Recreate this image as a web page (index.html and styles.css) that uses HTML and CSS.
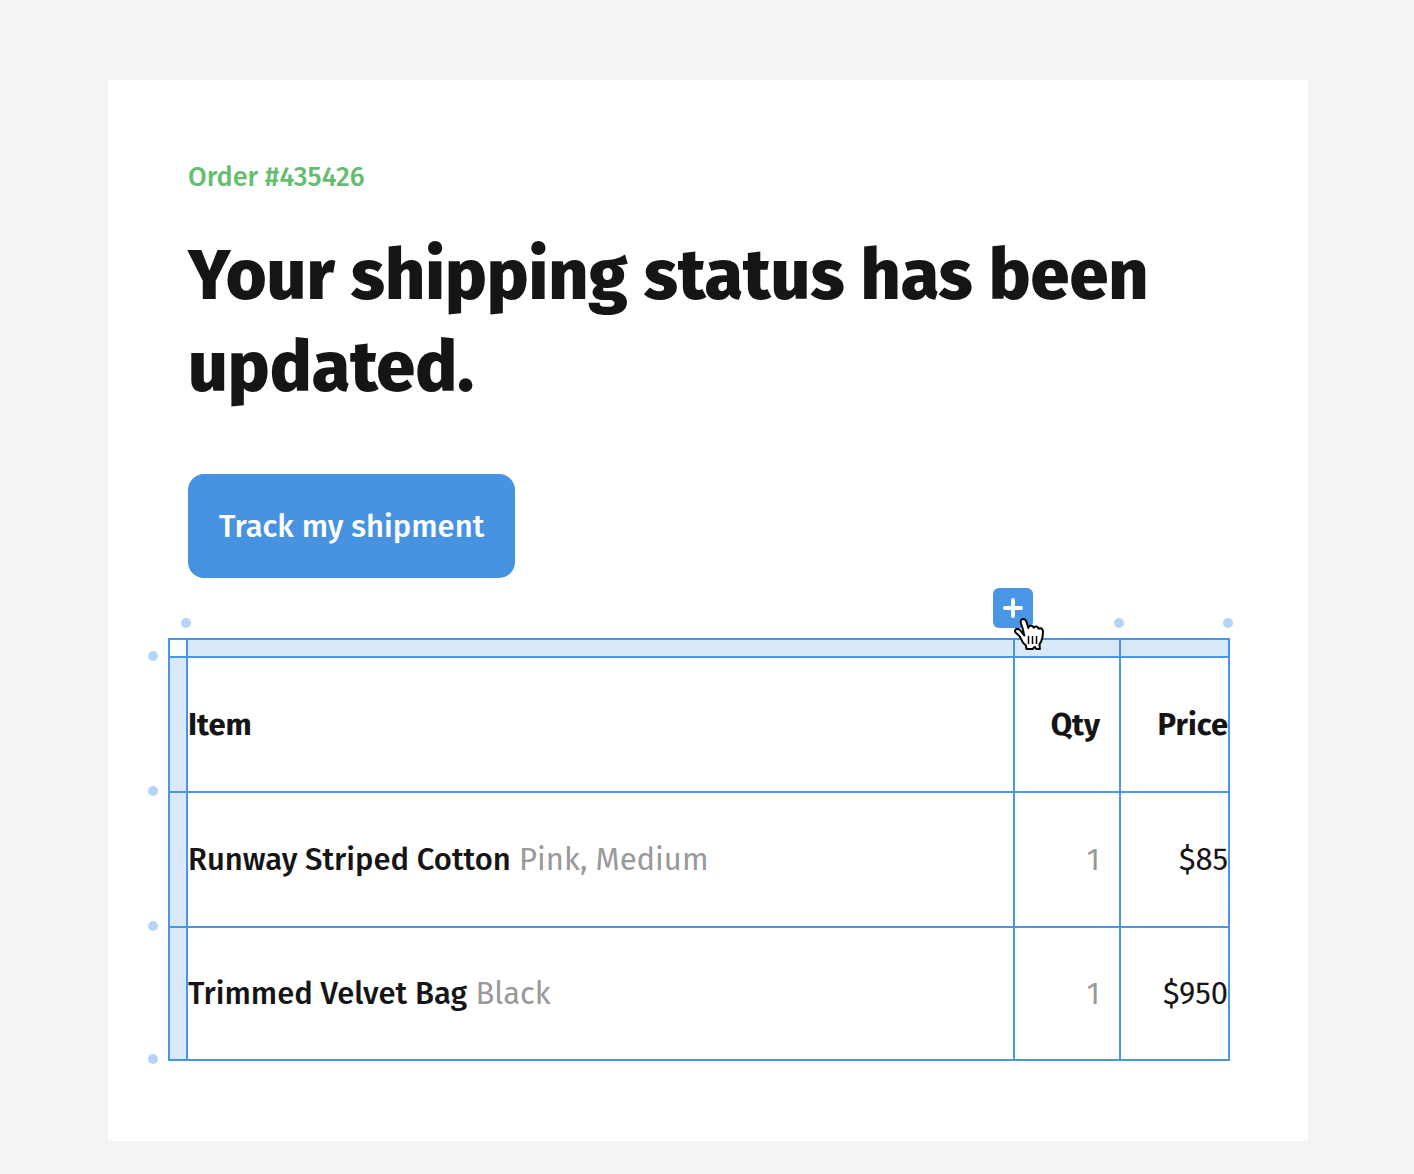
FILE: index.html
```html
<!DOCTYPE html>
<html lang="en">
<head>
<meta charset="utf-8">
<meta name="viewport" content="width=device-width, initial-scale=1">
<title>Order #435426</title>
<link rel="stylesheet" href="styles.css">
</head>
<body>
  <main class="email">
    <p class="order">Order #435426</p>
    <h1>Your shipping status has been updated.</h1>
    <button type="button" class="track">Track my shipment</button>

    <div class="editor">
      <table class="items">
        <colgroup>
          <col class="col-handle">
          <col>
          <col class="col-qty">
          <col class="col-price">
        </colgroup>
        <thead>
          <tr class="handles">
            <td class="corner">
              <button type="button" class="dot dot-col" aria-label="Insert column before Item"></button>
              <button type="button" class="dot dot-row" aria-label="Insert row at top"></button>
            </td>
            <td class="handle">
              <button type="button" class="add" aria-label="Insert column after Item">
                <svg width="20" height="20" viewBox="0 0 20 20" aria-hidden="true">
                  <path d="M10 2v16M2 10h16" fill="none" stroke="#fff" stroke-width="4" stroke-linecap="round"/>
                </svg>
              </button>
              <svg class="cursor" width="32" height="34" viewBox="0 0 32 34" aria-hidden="true">
                <path d="M11.300 18.500 9.500 11 8 6.500C7.200 3.800 8.200 2 10 2s2.900 1 3.500 3l1.900 6c.2-1.600 1.300-2.300 2.700-2.300s2.300.7 2.700 2c.6-.9 1.400-1.300 2.500-1.200s1.900.8 2.300 2.200c.7-.6 1.400-.7 2.300-.4 1.500.5 2.100 1.800 2.100 3.700 0 3.500-.6 6.500-1.700 9l-1.800 3.500.4 4.500h-3.700l-1.400-2.200-2.100 2.200h-6.200l-.6-3.500c-2.600-2-4.400-4.700-5.500-8-.8-1.700-2.300-2.700-4.100-4.200-1.500-1.300-1.700-2.500-.9-3.500 1-1.200 3-1 4.600.2l4.300 5.500" fill="#fff" stroke="#000" stroke-width="2" stroke-linejoin="round" stroke-linecap="round"/>
                <path d="M15.500 19v8M19.500 19v8M23.500 19v8" fill="none" stroke="#000" stroke-width="1.500"/>
              </svg>
            </td>
            <td class="handle">
              <button type="button" class="dot dot-col" aria-label="Insert column after Qty"></button>
            </td>
            <td class="handle">
              <button type="button" class="dot dot-col" aria-label="Insert column after Price"></button>
            </td>
          </tr>
          <tr>
            <td class="handle">
              <button type="button" class="dot dot-row" aria-label="Insert row below header"></button>
            </td>
            <th scope="col">Item</th>
            <th scope="col" class="qty">Qty</th>
            <th scope="col" class="price">Price</th>
          </tr>
        </thead>
        <tbody>
          <tr>
            <td class="handle">
              <button type="button" class="dot dot-row" aria-label="Insert row below Runway Striped Cotton"></button>
            </td>
            <td><strong>Runway Striped Cotton</strong> <span class="option">Pink, Medium</span></td>
            <td class="qty">1</td>
            <td class="price">$85</td>
          </tr>
          <tr>
            <td class="handle">
              <button type="button" class="dot dot-row" aria-label="Insert row below Trimmed Velvet Bag"></button>
            </td>
            <td><strong>Trimmed Velvet Bag</strong> <span class="option">Black</span></td>
            <td class="qty">1</td>
            <td class="price">$950</td>
          </tr>
        </tbody>
      </table>
    </div>
  </main>
</body>
</html>
```
FILE: styles.css
```css
* {
  box-sizing: border-box;
}
body {
  margin: 0;
  padding: 80px 106px 33px 108px;
  background: #f4f4f4;
  color: #151515;
  font-family: "Fira Sans", Roboto, sans-serif;
  font-size: 31px;
}
button {
  padding: 0;
  border: 0;
  font: inherit;
  cursor: pointer;
}
.email {
  max-width: 1200px;
  margin: 0 auto;
  padding: 80px;
  background: #fff;
}
.order {
  margin: 0;
  color: #65bd70;
  font-size: 27px;
  font-weight: 500;
  line-height: 34px;
}
h1 {
  margin: 36px 0 60px;
  font-size: 70px;
  font-weight: 800;
  line-height: 92px;
}
.track {
  display: block;
  height: 104px;
  padding: 0 31px;
  border-radius: 16px;
  background: #4793e1;
  color: #fff;
  font-weight: 500;
}

/* table with the editing handles around it */
.editor {
  margin: 60px -2px 0 -20px;
}
.items {
  width: 100%;
  table-layout: fixed;
  border-collapse: separate;
  border-spacing: 0;
  border: solid #4a96e6;
  border-width: 2px 0 0 2px;
}
.col-handle {
  width: 18px;
}
.col-qty {
  width: 106px;
}
.col-price {
  width: 109px;
}
.items th,
.items td {
  height: 135px;
  padding: 0;
  border: solid #4a96e6;
  border-width: 0 2px 2px 0;
  text-align: left;
  vertical-align: middle;
}
.items th {
  font-weight: 700;
}
.items strong {
  font-weight: 500;
}
.items tr:last-child td {
  height: 133px;
}
.items .handles td {
  height: 18px;
}
.items .handle,
.items .corner {
  position: relative;
}
.items .handle {
  background: #dae9f9;
}
.items .qty {
  padding-right: 19px;
  text-align: right;
}
.items .price {
  text-align: right;
}
.items td.qty,
.option {
  color: #999;
}

.dot {
  position: absolute;
  width: 10px;
  height: 10px;
  border-radius: 50%;
  background: #b5d5f6;
}
.dot-col {
  top: -22px;
  right: -5px;
}
.dot-row {
  bottom: -5px;
  left: -22px;
}
.add {
  position: absolute;
  top: -52px;
  right: -20px;
  display: flex;
  align-items: center;
  justify-content: center;
  width: 40px;
  height: 40px;
  border-radius: 6px;
  background: #4a96e6;
}
.cursor {
  position: absolute;
  z-index: 1;
  top: -23px;
  right: -32px;
}
```
